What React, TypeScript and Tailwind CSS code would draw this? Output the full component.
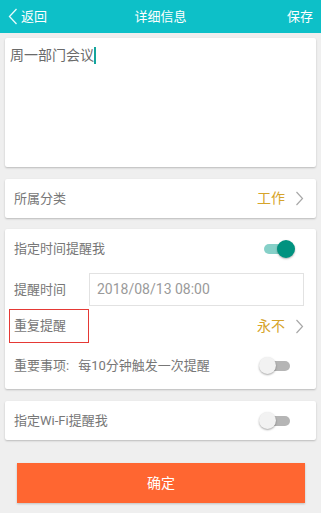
import React from "react";

const Chevron = ({ color = "#a8a8a8" }: { color?: string }) => (
  <svg width="9" height="15" viewBox="0 0 9 15" fill="none">
    <path d="M1.5 1 L7.5 7.5 L1.5 14" stroke={color} strokeWidth="1.2" />
  </svg>
);

const Toggle = ({ on }: { on: boolean }) =>
  on ? (
    <div className="relative w-[31px] h-[20px]">
      <div className="absolute left-0 top-[5px] w-[28px] h-[10px] rounded-full bg-[#86d0c8]" />
      <div className="absolute right-0 top-[1px] w-[18px] h-[18px] rounded-full bg-[#00927f] shadow-[0_1px_2px_rgba(0,0,0,0.3)]" />
    </div>
  ) : (
    <div className="relative w-[31px] h-[20px]">
      <div className="absolute right-0 top-[5px] w-[24px] h-[10px] rounded-full bg-[#b5b5b5]" />
      <div className="absolute left-0 top-[1px] w-[17px] h-[17px] rounded-full bg-[#f2f2f2] shadow-[0_1px_2px_rgba(0,0,0,0.35)]" />
    </div>
  );

export default function App() {
  const card = "bg-white rounded-[2px] shadow-[0_1px_2px_rgba(0,0,0,0.22)]";
  const label = "text-[13px] text-[#777777]";
  return (
    <div
      className="w-[321px] h-[513px] bg-[#efefef] overflow-hidden"
      style={{ fontFamily: 'Roboto, "Noto Sans CJK SC", sans-serif' }}
    >
      <div className="h-[33px] bg-[#0dc0c8] flex items-center text-white">
        <div className="flex-1 flex items-center pl-[8px]">
          <svg width="10" height="17" viewBox="0 0 10 17" fill="none">
            <path d="M8.5 1 L1.5 8.5 L8.5 16" stroke="#e8fbfc" strokeWidth="1.3" />
          </svg>
          <span className="ml-[3px] text-[13px]">返回</span>
        </div>
        <span className="text-[13px]">详细信息</span>
        <div className="flex-1 flex justify-end pr-[8px]">
          <span className="text-[13px]">保存</span>
        </div>
      </div>

      <div className="px-[5px]">
        <div className={`${card} mt-[5px] h-[129px] px-[5px] pt-[6px]`}>
          <div className="flex items-center text-[14px] text-[#6a6a6a] leading-[22px]">
            <span>周一部门会议</span>
            <span className="inline-block w-[2px] h-[17px] bg-[#13a59c]" />
          </div>
        </div>

        <div className={`${card} mt-[12px] h-[39px] flex items-center pl-[9px] pr-[12px]`}>
          <span className={`${label} flex-1`}>所属分类</span>
          <span className="text-[14px] text-[#d6a42a] mr-[10px]">工作</span>
          <Chevron />
        </div>

        <div className={`${card} mt-[11px] h-[160px]`}>
          <div className="h-[40px] flex items-center pl-[9px] pr-[21px]">
            <span className={`${label} flex-1`}>指定时间提醒我</span>
            <Toggle on />
          </div>
          <div className="mt-[4px] h-[33px] flex items-center pl-[9px] pr-[12px]">
            <span className={`${label} w-[75px]`}>提醒时间</span>
            <div className="flex-1 h-[33px] border border-[#e2e2e2] flex items-center pl-[7px] text-[14px] text-[#9a9a9a]">
              2018/08/13 08:00
            </div>
          </div>
          <div className="relative h-[40px] flex items-center pl-[9px] pr-[12px]">
            <div className="absolute left-[4px] top-[3px] w-[80px] h-[34px] border-[1.5px] border-[#e53935]" />
            <span className={`${label} flex-1`}>重复提醒</span>
            <span className="text-[14px] text-[#d6a42a] mr-[10px]">永不</span>
            <Chevron />
          </div>
          <div className="h-[39px] flex items-center pl-[9px] pr-[26px]">
            <span className={`${label} flex-1`}>
              重要事项:<span className="ml-[9px]">每10分钟触发一次提醒</span>
            </span>
            <Toggle on={false} />
          </div>
        </div>

        <div className={`${card} mt-[12px] h-[39px] flex items-center pl-[9px] pr-[26px]`}>
          <span className={`${label} flex-1`}>指定Wi-Fi提醒我</span>
          <Toggle on={false} />
        </div>

        <div className="mt-[23px] ml-[12px] mr-[11px] h-[40px] bg-[#ff6631] flex items-center justify-center text-white text-[14px] shadow-[0_1px_2px_rgba(0,0,0,0.2)]">
          确定
        </div>
      </div>
    </div>
  );
}
